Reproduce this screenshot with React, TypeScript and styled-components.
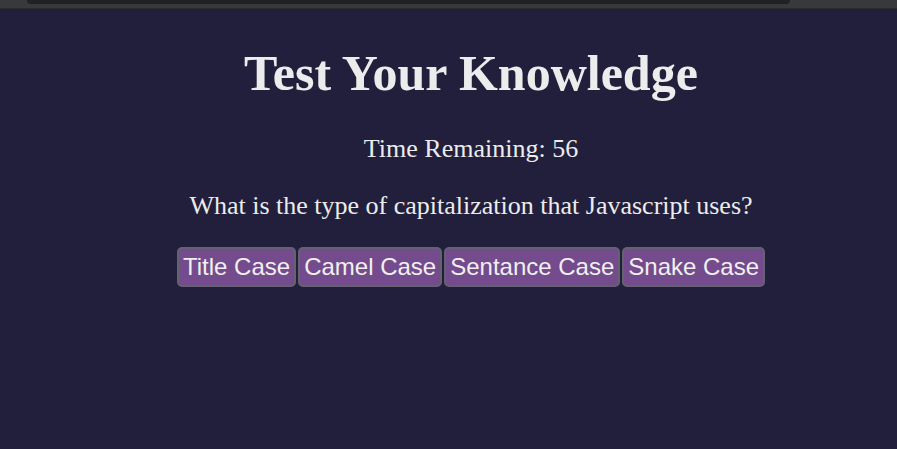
import React from "react";
import styled, { createGlobalStyle } from "styled-components";

const Global = createGlobalStyle`
  html, body { margin: 0; padding: 0; background: #221f3c; }
  body { font-family: "Liberation Serif", "Times New Roman", serif; color: #ececec; }
`;

const Chrome = styled.div`
  height: 8px;
  background: #38393c;
  border-bottom: 1px solid #2a2b2e;
  padding: 0 107px 0 27px;
`;

const ChromeBar = styled.div`
  height: 4px;
  background: #202124;
  border-radius: 0 0 8px 8px;
`;

const Main = styled.main`
  display: flex;
  flex-direction: column;
  align-items: center;
  padding: 36px 0 0 45px;
`;

const Title = styled.h1`
  margin: 0;
  font-size: 50px;
  font-weight: 700;
  line-height: 57px;
`;

const Timer = styled.p`
  margin: 32px 0 0;
  font-size: 26px;
  line-height: 30px;
`;

const Question = styled.p`
  margin: 27px 0 0;
  font-size: 26px;
  line-height: 30px;
`;

const Choices = styled.div`
  display: flex;
  gap: 2px;
  margin-top: 26px;
`;

const Choice = styled.button`
  font-family: "Liberation Sans", Arial, sans-serif;
  font-size: 24px;
  color: #f0f0f0;
  background: #744b8c;
  border: 2px solid #646270;
  border-radius: 5px;
  height: 40px;
  padding: 0 4px;
  cursor: pointer;
`;

const answers = ["Title Case", "Camel Case", "Sentance Case", "Snake Case"];

export default function App() {
  return (
    <>
      <Global />
      <Chrome>
        <ChromeBar />
      </Chrome>
      <Main>
        <Title>Test Your Knowledge</Title>
        <Timer>Time Remaining: 56</Timer>
        <Question>What is the type of capitalization that Javascript uses?</Question>
        <Choices>
          {answers.map((a) => (
            <Choice key={a}>{a}</Choice>
          ))}
        </Choices>
      </Main>
    </>
  );
}
